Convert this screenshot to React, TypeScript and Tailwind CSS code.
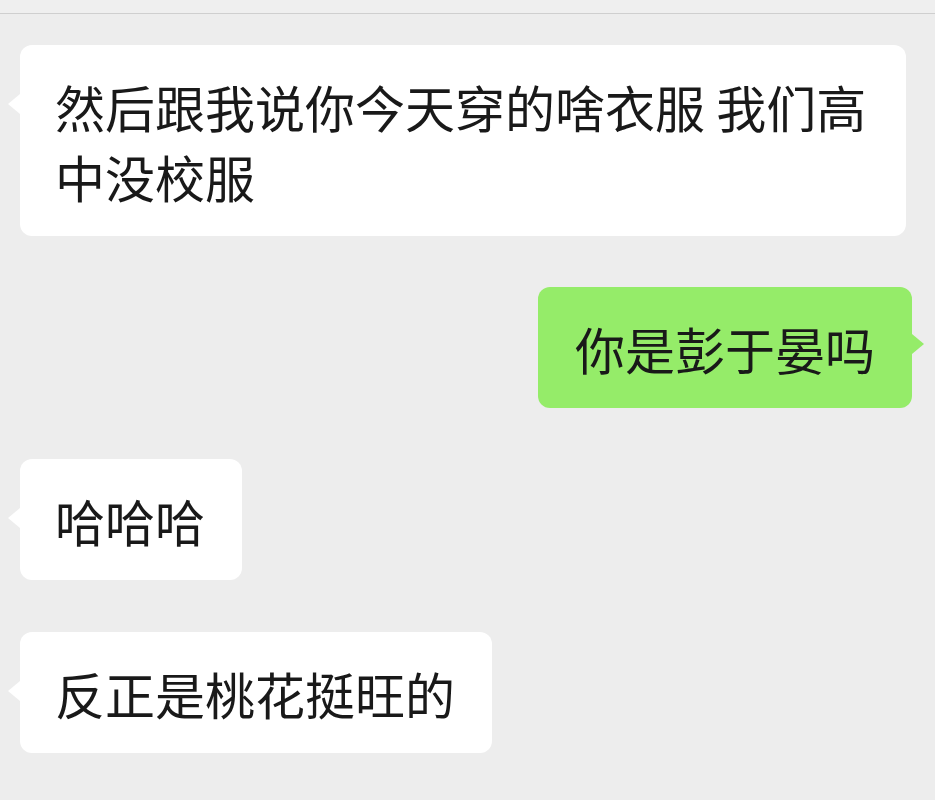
import React from "react";

function LeftBubble({ text, className = "" }: { text: string; className?: string }) {
  return (
    <div className={`relative self-start rounded-[12px] bg-white pt-[26px] pb-[25px] pl-[35px] pr-[37px] ${className}`}>
      <span className="absolute left-[-12px] top-[49px] h-0 w-0 border-y-[10px] border-r-[12px] border-y-transparent border-r-white" />
      {text}
    </div>
  );
}

export default function App() {
  return (
    <main
      className="min-h-[800px] w-[935px] bg-[#ededed] text-[50px] leading-[70px] text-[#191919]"
      style={{ fontFamily: '"Noto Sans CJK SC", "Noto Sans", sans-serif' }}
    >
      <div className="h-[14px] border-b border-[#cfcfcf] bg-[#efefef]" />
      <div className="flex flex-col pl-[20px] pr-[23px] pt-[31px]">
        <LeftBubble
          className="w-[886px]"
          text="然后跟我说你今天穿的啥衣服 我们高中没校服"
        />
        <div className="relative mt-[51px] self-end rounded-[12px] bg-[#95ec69] pt-[26px] pb-[25px] pl-[37px] pr-[37px]">
          <span className="absolute right-[-12px] top-[47px] h-0 w-0 border-y-[10px] border-l-[12px] border-y-transparent border-l-[#95ec69]" />
          你是彭于晏吗
        </div>
        <LeftBubble className="mt-[51px]" text="哈哈哈" />
        <LeftBubble className="mt-[52px]" text="反正是桃花挺旺的" />
      </div>
    </main>
  );
}
